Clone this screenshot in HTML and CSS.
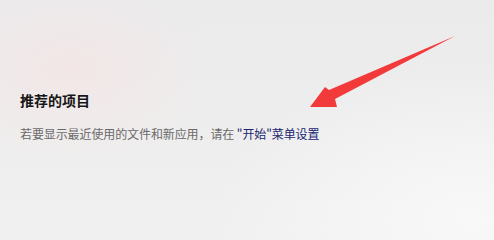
FILE: index.html
```html
<!DOCTYPE html>
<html lang="zh-CN">
<head>
<meta charset="utf-8">
<title>推荐的项目</title>
<link rel="stylesheet" href="styles.css">
</head>
<body>
<main class="panel">
  <section class="recommended">
    <h2 class="title">推荐的项目</h2>
    <p class="hint">若要显示最近使用的文件和新应用，请在 <a class="link" href="#">"开始"菜单设置</a></p>
  </section>
  <svg class="arrow" width="494" height="222" viewBox="0 0 494 222" aria-hidden="true">
    <polygon points="310,107 325,87 329,90 455,36 335,99 337,107" fill="#f23a3a"/>
  </svg>
</main>
</body>
</html>
```
FILE: styles.css
```css
html, body {
  margin: 0;
  padding: 0;
  background: #f1f0f0;
}
body {
  width: 494px;
  min-height: 100vh;
  overflow: hidden;
  font-family: "Noto Sans CJK SC", "Liberation Sans", sans-serif;
}
.panel {
  position: relative;
  width: 494px;
  min-height: 100vh;
  box-sizing: border-box;
  padding: 90px 0 0 20px;
  background:
    radial-gradient(ellipse 140px 90px at 70px 70px, rgba(245, 228, 228, 0.7), rgba(245, 228, 228, 0) 100%),
    radial-gradient(ellipse 260px 160px at 470px 220px, rgba(248, 248, 248, 1), rgba(248, 248, 248, 0) 100%),
    linear-gradient(180deg, #ebebec 0px, #eeeded 111px, #f1f0f0 222px);
}
.recommended {
  display: flex;
  flex-direction: column;
  gap: 14px;
}
.title {
  margin: 0;
  font-size: 14px;
  line-height: 20px;
  font-weight: 700;
  color: #161616;
}
.hint {
  margin: 0;
  font-size: 12px;
  line-height: 20px;
  letter-spacing: -0.1px;
  color: #6a6a6a;
}
.link {
  color: #1a2670;
  text-decoration: none;
}
.arrow {
  position: absolute;
  left: 0;
  top: 0;
}
```
